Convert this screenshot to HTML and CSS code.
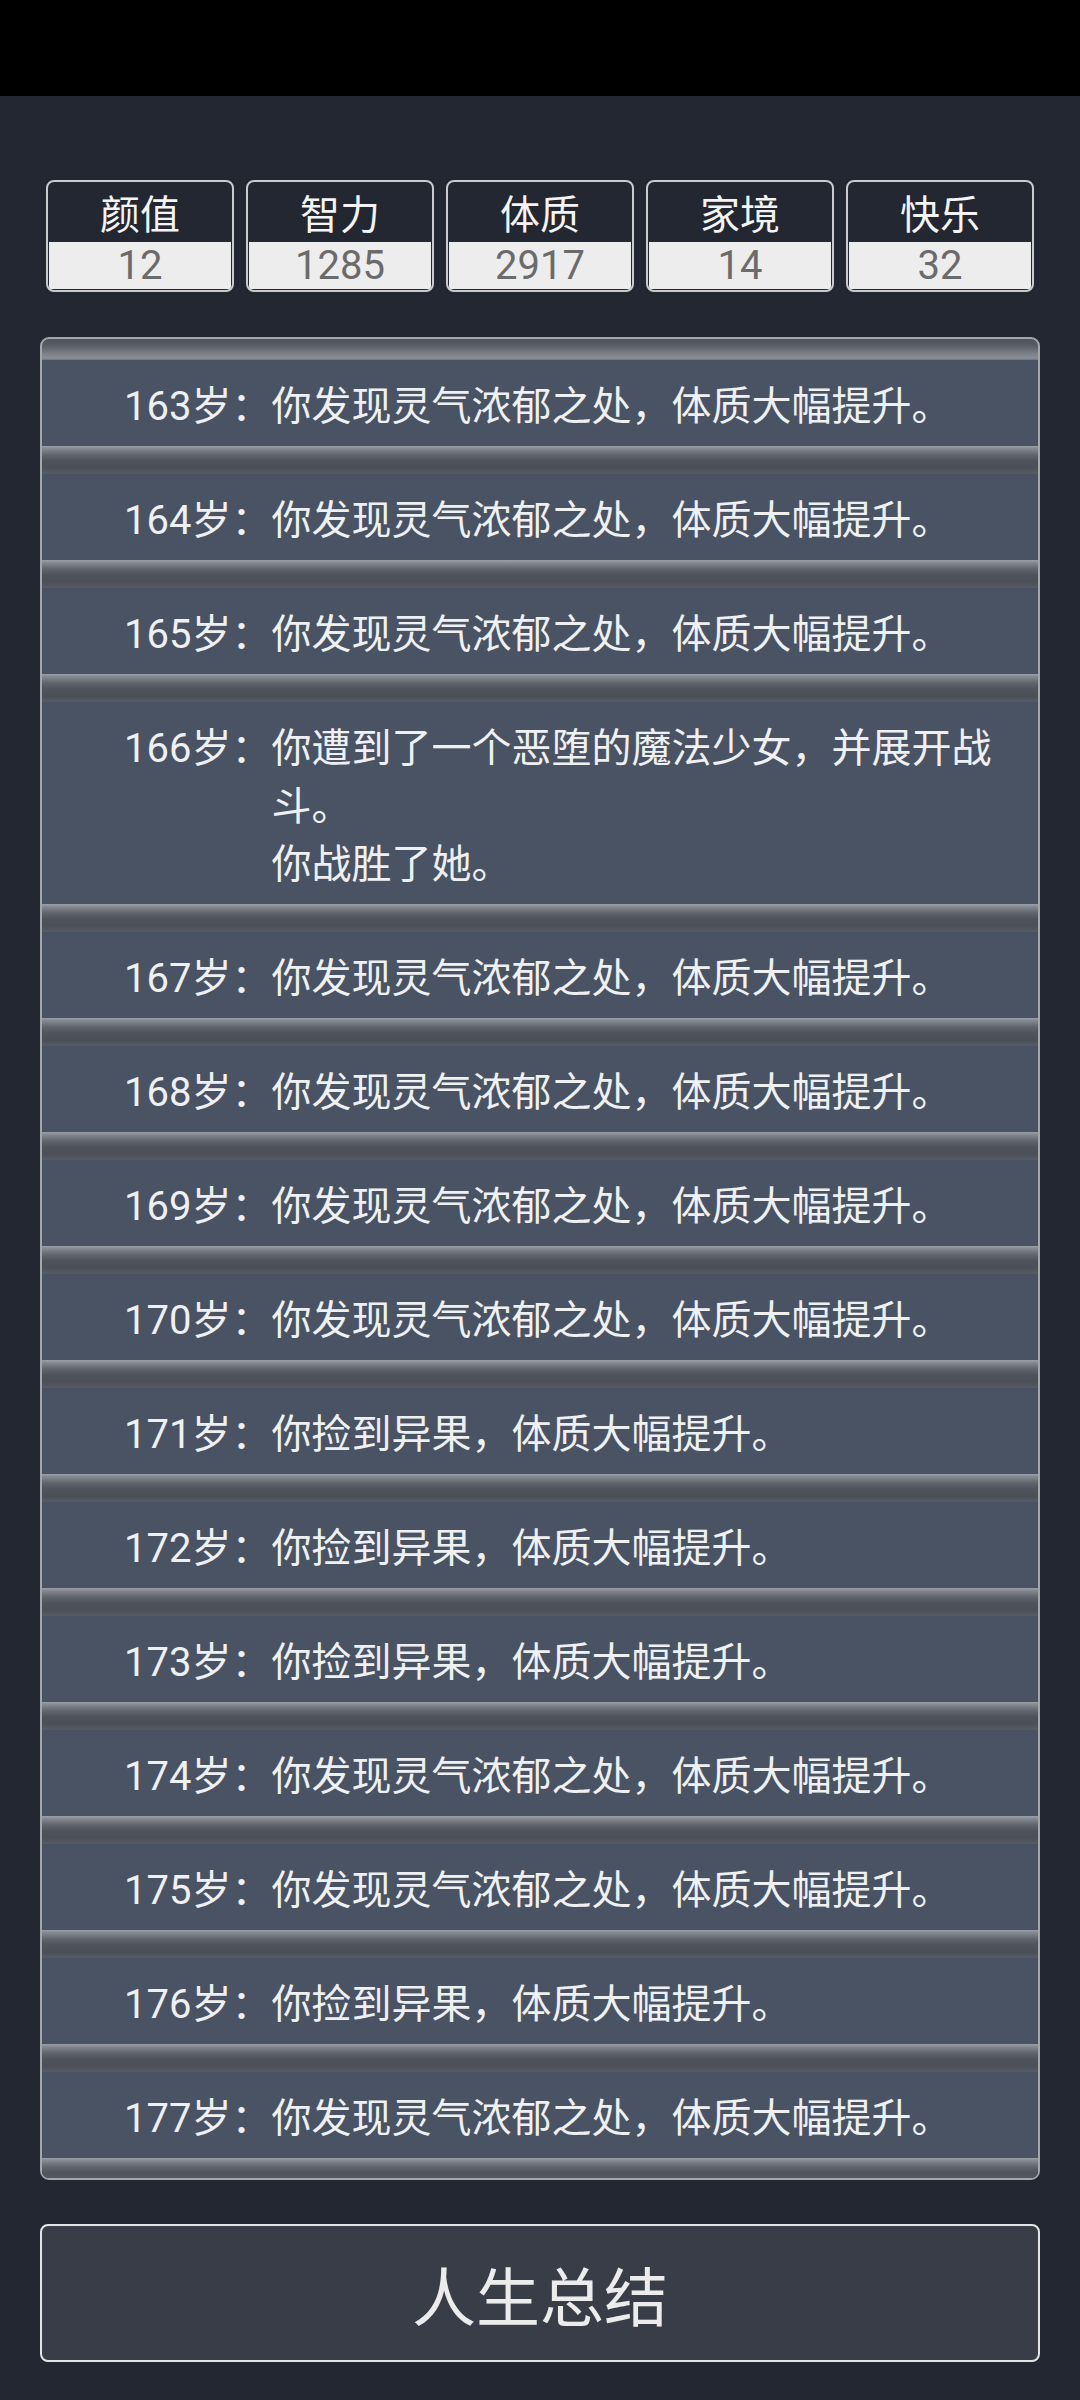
FILE: index.html
```html
<!DOCTYPE html>
<html lang="zh-CN">
<head>
    <meta charset="UTF-8">
    <title>人生重开模拟器</title>
    <link rel="stylesheet" href="styles.css">
</head>
<body>

<div class="statusbar"></div>

<div class="page">
    <div class="stats">
        <div class="stat"><div class="label">颜值</div><div class="value">12</div></div>
        <div class="stat"><div class="label">智力</div><div class="value">1285</div></div>
        <div class="stat"><div class="label">体质</div><div class="value">2917</div></div>
        <div class="stat"><div class="label">家境</div><div class="value">14</div></div>
        <div class="stat"><div class="label">快乐</div><div class="value">32</div></div>
    </div>

    <div class="log">
        <div class="entry"><span class="age">163岁：</span><span class="text">你发现灵气浓郁之处，体质大幅提升。</span></div>
        <div class="entry"><span class="age">164岁：</span><span class="text">你发现灵气浓郁之处，体质大幅提升。</span></div>
        <div class="entry"><span class="age">165岁：</span><span class="text">你发现灵气浓郁之处，体质大幅提升。</span></div>
        <div class="entry"><span class="age">166岁：</span><span class="text">你遭到了一个恶堕的魔法少女，并展开战斗。<br>你战胜了她。</span></div>
        <div class="entry"><span class="age">167岁：</span><span class="text">你发现灵气浓郁之处，体质大幅提升。</span></div>
        <div class="entry"><span class="age">168岁：</span><span class="text">你发现灵气浓郁之处，体质大幅提升。</span></div>
        <div class="entry"><span class="age">169岁：</span><span class="text">你发现灵气浓郁之处，体质大幅提升。</span></div>
        <div class="entry"><span class="age">170岁：</span><span class="text">你发现灵气浓郁之处，体质大幅提升。</span></div>
        <div class="entry"><span class="age">171岁：</span><span class="text">你捡到异果，体质大幅提升。</span></div>
        <div class="entry"><span class="age">172岁：</span><span class="text">你捡到异果，体质大幅提升。</span></div>
        <div class="entry"><span class="age">173岁：</span><span class="text">你捡到异果，体质大幅提升。</span></div>
        <div class="entry"><span class="age">174岁：</span><span class="text">你发现灵气浓郁之处，体质大幅提升。</span></div>
        <div class="entry"><span class="age">175岁：</span><span class="text">你发现灵气浓郁之处，体质大幅提升。</span></div>
        <div class="entry"><span class="age">176岁：</span><span class="text">你捡到异果，体质大幅提升。</span></div>
        <div class="entry"><span class="age">177岁：</span><span class="text">你发现灵气浓郁之处，体质大幅提升。</span></div>
    </div>

    <button class="summary">人生总结</button>
</div>

</body>
</html>
```

FILE: styles.css
```css
body {
    font-family: Roboto, 'Noto Sans CJK SC', sans-serif;
    background: #222731;
    margin: 0;
    padding: 0;
    color: #eef0f2;
}

.statusbar {
    height: 96px;
    background: #000;
}

.page {
    padding: 84px 40px 40px;
}

.stats {
    display: flex;
    gap: 12px;
    padding: 0 6px;
}

.stat {
    flex: 1;
    border: 2px solid #c9cbce;
    border-radius: 8px;
    padding: 0 1px 1px;
    overflow: hidden;
}

.stat .label {
    height: 52px;
    padding-top: 8px;
    line-height: 52px;
    text-align: center;
    font-size: 40px;
    color: #f4f4f4;
}

.stat .value {
    height: 47px;
    line-height: 47px;
    text-align: center;
    font-size: 40px;
    color: #6b6b6b;
    background: #ededed;
}

.log {
    margin-top: 45px;
    border: 2px solid #a3a6ab;
    border-radius: 9px;
    overflow: hidden;
    padding-top: 21px;
    background: linear-gradient(#4e535c 0, #555a63 6px, #7d8289 15px, #8a8e95 19px, #70757d 21px) top / 100% 21px no-repeat, #4a4f58;
}

.entry {
    display: flex;
    padding: 18px 30px 38px 82px;
    font-size: 40px;
    line-height: 58px;
    background: linear-gradient(#9a9ea5 0, #83878f 3px, #5f646d 9px, #4d525b 15px, #4a4f58 22px, #565b64 28px) left bottom / 100% 28px no-repeat, #4a5363;
}

.entry:last-child {
    padding-bottom: 30px;
    background: linear-gradient(#9a9ea5 0, #83878f 3px, #5f646d 9px, #4d525b 15px, #555a63 20px) left bottom / 100% 20px no-repeat, #4a5363;
}

.entry .age {
    white-space: nowrap;
}

.entry .text {
    flex: 1;
}

.summary {
    display: block;
    width: 100%;
    height: 138px;
    margin-top: 44px;
    background: #393d47;
    border: 2px solid #e4e4e4;
    border-radius: 8px;
    color: #ececec;
    font-family: Roboto, 'Noto Sans CJK SC', sans-serif;
    font-size: 64px;
}
```
